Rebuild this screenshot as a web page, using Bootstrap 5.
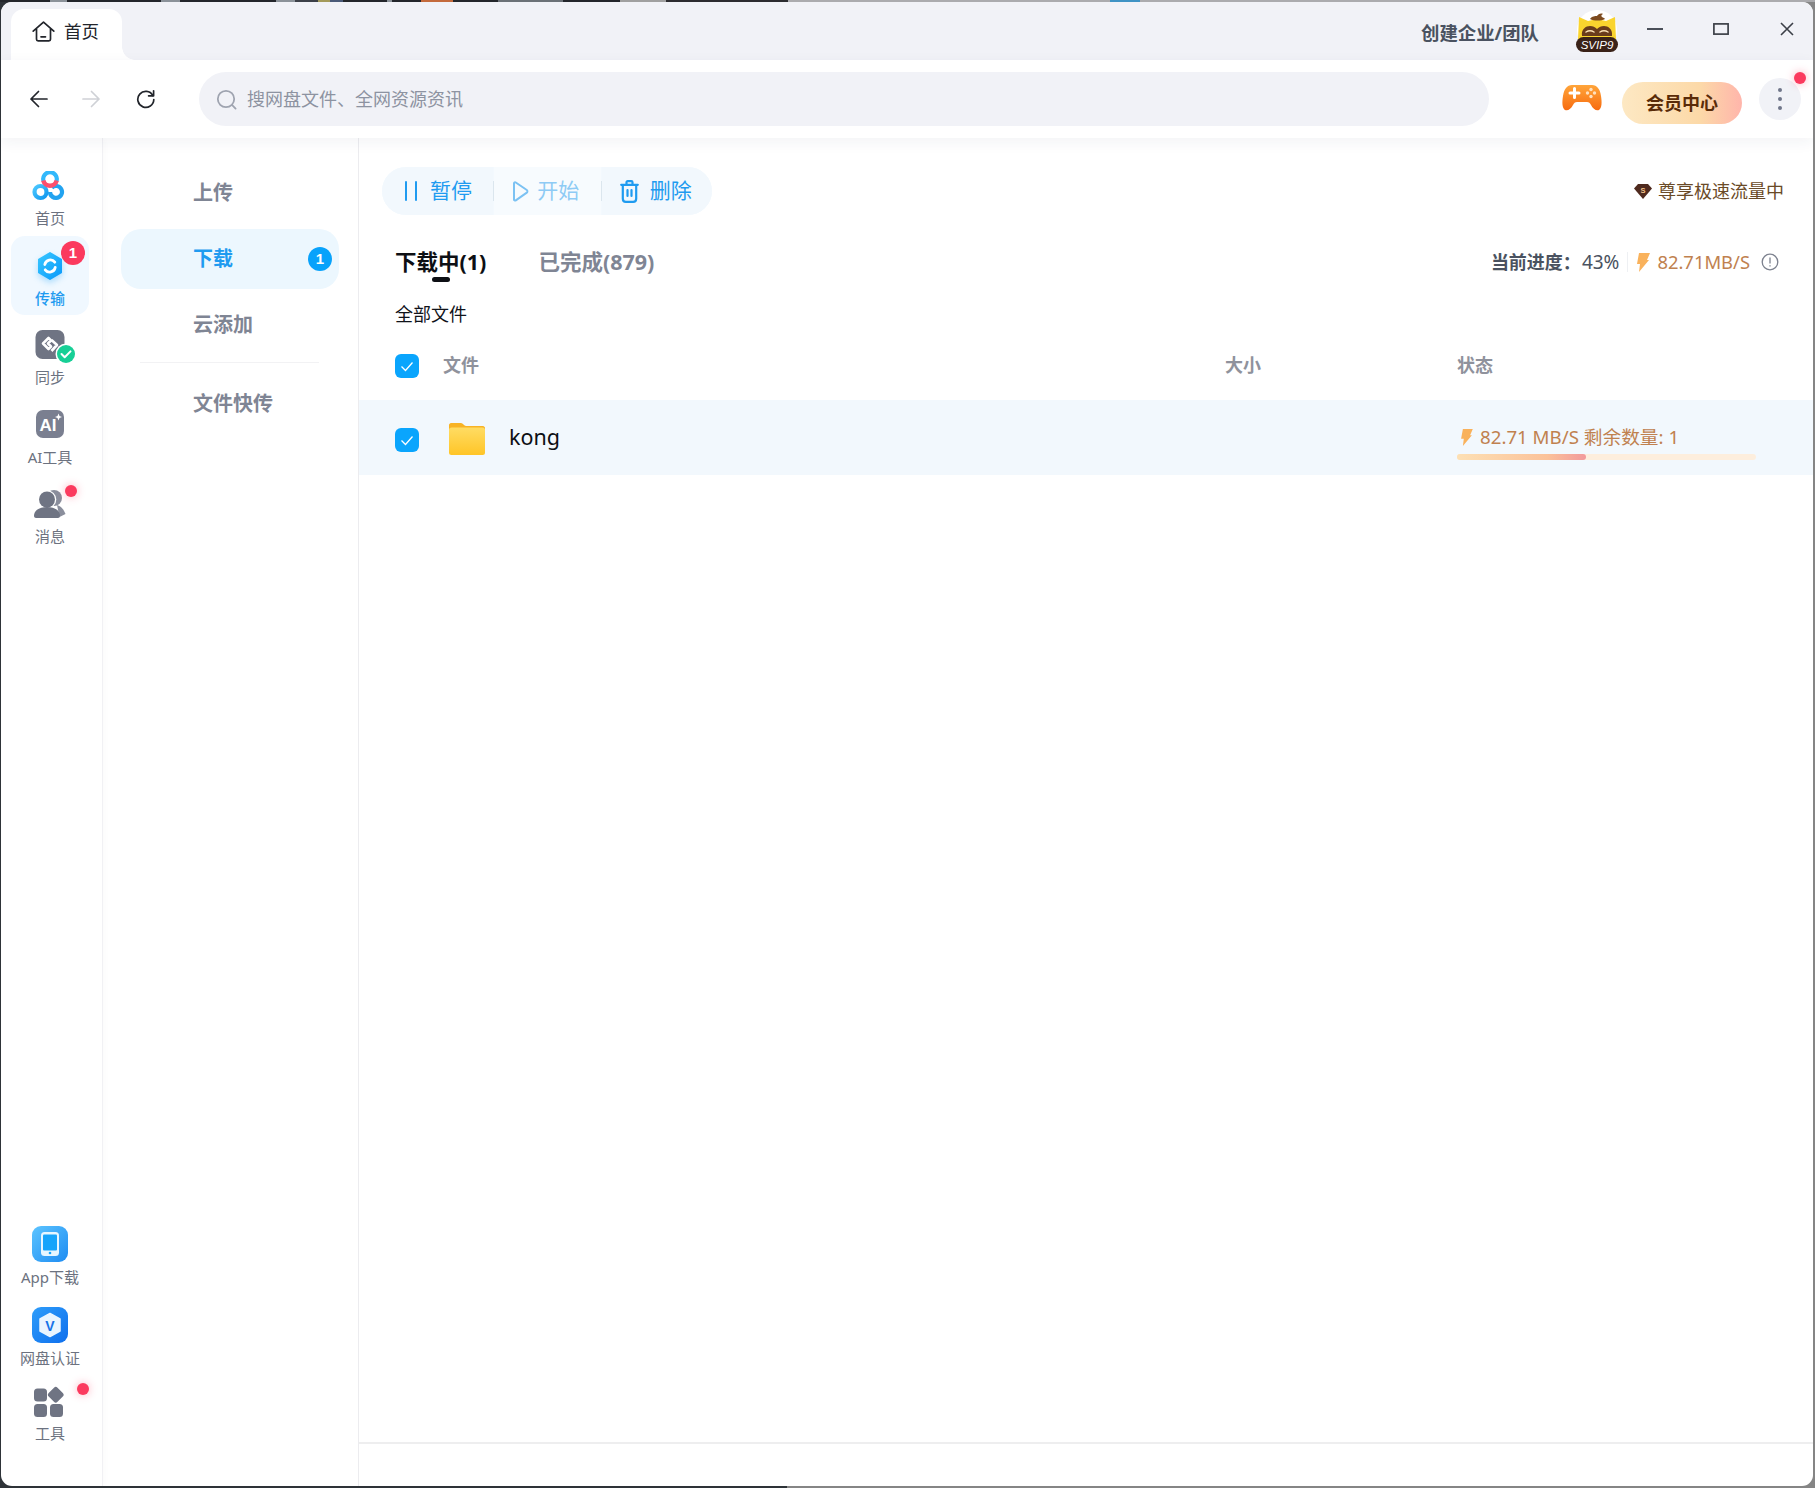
<!DOCTYPE html>
<html lang="zh-CN">
<head>
<meta charset="utf-8">
<title>首页</title>
<link href="https://cdn.jsdelivr.net/npm/bootstrap@5.3.0/dist/css/bootstrap.min.css" rel="stylesheet">
<style>
html,body{height:100%;margin:0}
body{
  width:1815px;height:1488px;overflow:hidden;padding:2px 2px 2px 1px;
  font-family:"Noto Sans","Noto Sans CJK SC",sans-serif;
  background:
   linear-gradient(90deg,#23262b 0 50px,#8b9299 50px 67px,#23262b 67px 161px,#8b9299 161px 180px,#23262b 180px 276px,#8b9299 276px 295px,#3c4048 295px 318px,#a39a5a 318px 330px,#4a5a78 330px 343px,#23262b 343px 387px,#8b9299 387px 392px,#23262b 392px 421px,#c46a3c 421px 453px,#23262b 453px 498px,#6b7177 498px 563px,#23262b 563px 620px,#a0a0a0 620px 666px,#2c2c30 666px 788px,#ababae 788px 1110px,#3f93c4 1110px 1140px,#ababae 1140px 100%) top/100% 2px no-repeat,
   linear-gradient(90deg,#2e3338 0 787px,#858585 787px 100%);
}
.app-window{height:1484px;background:#fff;border-radius:11px;overflow:hidden}
/* title bar */
.title-strip{height:58px;background:#f1f2f7;padding:7px 0 0 10px;flex:none}
.home-tab{width:111px;height:51px;background:#fff;border-radius:13px 13px 0 0;position:relative;padding:0 0 6px 21px;gap:9px;font-size:17.5px;color:#22252b}
.home-tab::after{content:"";position:absolute;left:100%;bottom:0;width:13px;height:13px;background:radial-gradient(circle at 100% 0,#f1f2f7 12.500px,#fff 13px)}
.right-ctl{margin-right:-7px}
.team-link{font-size:18.400px;font-weight:700;color:#4a5260;margin-right:36px;margin-top:-4px}
.avatar-box{width:44px;height:44px;margin-right:3px;margin-top:-7px}
.win-ctl{width:66px;height:44px;margin-top:-12px}
/* tool bar */
.tool-strip{height:78px;padding:0 10px 0 28px;flex:none;position:relative;z-index:2;box-shadow:0 4px 14px rgba(40,50,80,.06);background:#fff}
.nav-arrow{width:20px;height:20px}
.nav-arrow svg{display:block}
.nav-fwd{margin-left:32px}
.nav-reload{margin-left:35px}
.search-pill{width:1290px;height:54px;border-radius:27px;background:#f1f2f7;margin-left:43px;padding-left:17px;font-size:18px;color:#8d93a1;gap:10px}
.pad-game{width:40px;height:30px;margin-left:73px}
.vip-btn{width:120px;height:42px;margin-left:20px;border-radius:21px;border:0;font-size:18px;font-weight:700;color:#5a2b08;background:linear-gradient(90deg,#fde8c3,#fcd9a8 65%,#ffb5ab);padding:0;margin-top:8px}
.more-btn{width:42px;height:42px;margin-left:17px;border-radius:50%;background:#f1f2f7;position:relative}
.red-dot{position:absolute;width:12px;height:12px;border-radius:50%;background:#fb3a5e;box-shadow:0 0 8px rgba(251,58,94,.4)}
.more-btn .red-dot{right:-5px;top:-6px}
.dot-msg{right:12px;top:11px}
.dot-tools{right:0;top:-3px}
/* rail */
.rail-col{width:102px;flex:none;padding:18px 0 43px;border-right:1px solid #f1f1f4;box-shadow:2px 0 6px rgba(30,40,70,.02)}
.rail-entry{width:78px;height:79.500px;margin-left:10px;padding-top:15px;border-radius:14px;position:relative;font-size:15px;color:#6c7280;line-height:20px}
.rail-ico{height:30px;margin-bottom:7px}
.rail-ico svg{display:block;margin:0 auto}
.rail-entry.is-on{background:#f0f8ff;color:#1f9bf0;font-weight:500}
.rail-low{height:81px;padding-top:0}
.rail-low .rail-ico{height:36px;margin-bottom:5px}
.rail-last{height:79px}
.rail-tools{height:57px;padding-top:0}
.rail-tools .rail-ico{height:30px;margin-bottom:7px}
.rail-num{position:absolute;width:24px;height:24px;border-radius:50%;background:#fb3a5e;color:#fff;font-size:15px;font-weight:700;line-height:24px;right:4px;top:5px;font-family:"Liberation Sans",sans-serif}
.ok-mark{position:absolute;left:44px;top:28px}
.hex-shadow{filter:drop-shadow(0 3px 3px rgba(10,154,250,.3))}
/* sub nav */
.sub-col{width:256px;flex:none;padding:25px 19px 0 18px;border-right:1px solid #ececef;gap:6px}
.sub-entry{height:60px;border-radius:20px;padding-left:72px;padding-right:7px;font-size:20px;font-weight:700;color:#7f8594}
.sub-entry.is-on{background:#ecf7fe;color:#1f9bf0}
.sub-num{width:24px;height:24px;border-radius:50%;background:#08a2fb;color:#fff;font-size:15px;line-height:24px;font-family:"Liberation Sans",sans-serif}
.sub-rule{height:1px;background:#f2f2f4;margin:1px 20px 5px 19px}
/* main */
.main-col{min-width:0}
.op-pill{height:48px;width:330px;margin:29px 0 0 23px;border-radius:24px;background:#f3f9fe;font-size:21px;color:#1f9bf0}
.op-cell{height:100%;gap:12px}
.op-one{width:112px;padding-left:22px;background:#f2f8fd;border-radius:24px 0 0 24px}
.op-two{width:107px;padding-left:18px;color:#8ecbf5;gap:8px;background:#f7fbfe}
.op-three{width:111px;padding-left:18px;gap:11px;background:#f2f8fd;border-radius:0 24px 24px 0}
.op-sep{width:1px;height:20px;background:#dbe6ee;flex:none}
.vip-note{font-size:18px;color:#6a4a27;right:29px;top:40px;gap:6px}
.tab-bar{padding:0 34px 0 36px;height:48px;margin-top:23px}
.tab-head{font-size:21.500px;font-weight:700;color:#7f8594;position:relative;margin-right:52px}
.tab-head.is-on{color:#0d0f14}
.tab-head.is-on::after{content:"";position:absolute;left:37px;bottom:-4px;width:18px;height:5px;border-radius:3px;background:#0d0f14}
.stats{font-size:18.400px;color:#4a5260;gap:5px}
.stats b{font-size:18px;font-weight:700;margin-right:-4px}
.stats .pct{font-size:19px}
.stats .rate{color:#c0814f;margin-left:2px}
.stats .info-mark{margin-left:6px}
.stat-sep{width:1px;height:20px;background:#eef0f3;margin:0 3px}
.crumb-line{padding-left:36px;font-size:18px;color:#10131a;height:28px;line-height:28px;margin-top:14px}
.file-grid{display:grid;grid-template-columns:830px 232px 1fr;padding-left:36px;align-items:center}
.head-grid{height:64px;padding-bottom:6px;font-size:18px;font-weight:700;color:#8f929c;margin-top:8px}
.body-grid{height:75px;background:#f2f8fd}
.tick-box{width:24px;height:24px;border-radius:6px;background:#0aa5fd;flex:none;margin-top:2px}
.body-grid .tick-box{margin-top:5px}
.folder-ico{margin:2px 24px 0 30px}
.file-name{font-size:21.500px;color:#0d0f14}
.status-top{font-size:18.700px;color:#c0814f;gap:7px;margin-top:8px;margin-left:3px}
.bar-track{width:299px;height:6px;border-radius:3px;background:#fdeedd;margin-top:2px}
.bar-fill{height:100%;border-radius:3px;background:linear-gradient(90deg,#fde0b4,#fbc29a 70%,#f29a9c)}
.foot-strip{height:44px;border-top:2px solid #eeeeef;flex:none}
</style>
</head>
<body>
<div class="app-window d-flex flex-column">

  <div class="title-strip d-flex align-items-start">
    <div class="home-tab d-flex align-items-center">
      <svg width="23" height="21" viewBox="0 0 23 21" fill="none" stroke="#22252b" stroke-width="1.700" stroke-linejoin="round" stroke-linecap="round"><path d="M1.200 10.200 11.500 1.200l10.300 9M4.500 8v10.200a1.600 1.600 0 0 0 1.600 1.600h10.800a1.600 1.600 0 0 0 1.600-1.600V8"/><path d="M9 15.800h4.500"/></svg>
      <span>首页</span>
    </div>
    <div class="ms-auto right-ctl d-flex align-items-center h-100">
      <span class="team-link">创建企业/团队</span>
      <div class="avatar-box">
        <svg width="44" height="44" viewBox="0 0 44 44">
          <circle cx="22" cy="21" r="20" fill="#fff"/>
          <path d="M4 8l9 4c6-2 12-2 18 0l9-4 1 22H3z" fill="#fad42e"/>
          <path d="M7 27c-1-7 4-10 8-10 3 0 5 1 7 3 2-2 4-3 7-3 4 0 9 3 8 10z" fill="#6a3c1b"/>
          <path d="M15 10c2-3 5-3 7-3 1-2 4-3 6-2-2 1-2 2-1 3 1 1 3 1 3 2-4 2-11 2-15 0z" fill="#7d4b20"/>
          <path d="M11 23c3-2 5-2 8 0M25 23c3-2 5-2 8 0" stroke="#f9dfb4" stroke-width="1.500" fill="none" stroke-linecap="round"/>
          <rect x="1" y="28" width="42" height="15" rx="7.500" fill="#3a2218"/>
          <text x="22" y="40" text-anchor="middle" font-family="Liberation Sans" font-style="italic" font-size="11.500" fill="#fff">SVIP9</text>
        </svg>
      </div>
      <div class="win-ctl d-flex align-items-center justify-content-center"><svg width="16" height="2"><rect width="16" height="2" fill="#4a4f59"/></svg></div>
      <div class="win-ctl d-flex align-items-center justify-content-center"><svg width="16" height="12" fill="none" stroke="#3c4048" stroke-width="1.700"><rect x=".9" y=".9" width="14.200" height="10.200"/></svg></div>
      <div class="win-ctl d-flex align-items-center justify-content-center"><svg width="14" height="14" stroke="#3c4048" stroke-width="1.600"><path d="M1 1l12 12M13 1 1 13"/></svg></div>
    </div>
  </div>

  <div class="tool-strip d-flex align-items-center">
    <div class="nav-arrow"><svg width="20" height="20" fill="none" stroke="#22252b" stroke-width="1.700" stroke-linecap="round" stroke-linejoin="round"><path d="M18 10H2M9.500 2.500 2 10l7.500 7.500"/></svg></div>
    <div class="nav-arrow nav-fwd"><svg width="20" height="20" fill="none" stroke="#cfd1d6" stroke-width="1.700" stroke-linecap="round" stroke-linejoin="round"><path d="M2 10h16M10.500 2.500 18 10l-7.500 7.500"/></svg></div>
    <div class="nav-arrow nav-reload"><svg width="20" height="20" fill="none" stroke="#22252b" stroke-width="1.700" stroke-linecap="round" stroke-linejoin="round"><path d="M16.800 6.500a8 8 0 1 0 1 4"/><path d="M17.600 1.800v5h-5"/></svg></div>
    <div class="search-pill d-flex align-items-center">
      <svg width="21" height="21" fill="none" stroke="#9fa4b0" stroke-width="1.800" stroke-linecap="round"><circle cx="10" cy="10" r="8.200"/><path d="M16.200 16.200l3.400 3.400"/></svg>
      <span>搜网盘文件、全网资源资讯</span>
    </div>
    <div class="pad-game">
      <svg width="40" height="27" viewBox="0 0 40 27"><defs><linearGradient id="gp" x1="0" y1="0" x2="0" y2="1"><stop offset="0" stop-color="#ffa53a"/><stop offset="1" stop-color="#f76b0f"/></linearGradient></defs>
      <path d="M10 1h20c5 0 8 4 9 11 1 6 1 12-2 14-3 1-6-1-8-5-1-2-2-3-4-3H15c-2 0-3 1-4 3-2 4-5 6-8 5-3-2-3-8-2-14C2 5 5 1 10 1z" fill="url(#gp)"/>
      <path d="M8 9h9M12.500 4.500v9" stroke="#fff" stroke-width="3" stroke-linecap="round"/>
      <circle cx="29" cy="5.500" r="1.700" fill="#ffe0bd"/><circle cx="29" cy="12.500" r="1.700" fill="#ffe0bd"/><circle cx="25.500" cy="9" r="1.700" fill="#ffe0bd"/><circle cx="32.500" cy="9" r="1.700" fill="#ffe0bd"/></svg>
    </div>
    <button type="button" class="vip-btn">会员中心</button>
    <div class="more-btn d-flex flex-column align-items-center justify-content-center gap-1">
      <svg width="4" height="24" fill="#70768a"><circle cx="2" cy="3" r="2"/><circle cx="2" cy="12" r="2"/><circle cx="2" cy="21" r="2"/></svg>
      <span class="red-dot"></span>
    </div>
  </div>

  <div class="d-flex flex-grow-1 overflow-hidden">
    <div class="rail-col d-flex flex-column">
      <div class="rail-entry text-center">
        <div class="rail-ico">
          <svg width="36" height="30" viewBox="0 0 36 30" fill="none" stroke-width="4.200"><defs><linearGradient id="lg" x1="0" y1="0" x2="1" y2="1"><stop offset="0" stop-color="#4cc8ff"/><stop offset="1" stop-color="#0f97ef"/></linearGradient></defs>
          <circle cx="8.500" cy="21" r="6" stroke="url(#lg)"/><path d="M18 21a6 6 0 1 0 1.800-4.300 M18 21a6 6 0 0 0 11 3.200" stroke="#22a3f0"/><path d="M11.500 10a6.800 6.800 0 1 1 13 0" stroke="#32b8fb"/><path d="M11.300 9.500a6.900 6.900 0 0 0 13.400 0" stroke="#fb4f6e" stroke-width="4.500"/></svg>
        </div>首页
      </div>
      <div class="rail-entry is-on text-center">
        <div class="rail-ico">
          <svg class="hex-shadow" width="30" height="30" viewBox="0 0 30 30"><defs><linearGradient id="hx" x1="0" y1="0" x2="1" y2="1"><stop offset="0" stop-color="#37c6ff"/><stop offset="1" stop-color="#0a9afa"/></linearGradient></defs>
          <path d="M15 2 26 8.500v13L15 28 4 21.500v-13z" fill="url(#hx)" stroke="url(#hx)" stroke-width="2" stroke-linejoin="round"/>
          <path d="M9.800 13.500a5.600 5.600 0 0 1 10-2.300M20.200 16.500a5.600 5.600 0 0 1-10 2.300" stroke="#fff" stroke-width="2.800" fill="none" stroke-linecap="round"/></svg>
        </div>传输
        <span class="rail-num">1</span>
      </div>
      <div class="rail-entry text-center">
        <div class="rail-ico">
          <svg width="30" height="30" viewBox="0 0 30 30"><rect x=".5" width="29" height="29" rx="7" fill="#6f7483"/><path d="M13.500 8 8 13.500l5.500 5.500 2.500-2.500-3-3 3-3zM16.500 10l5.500 5-5.500 6" fill="none" stroke="#fff" stroke-width="2.600" stroke-linejoin="round"/></svg>
        </div>同步
        <svg class="ok-mark" width="22" height="22" viewBox="0 0 22 22"><circle cx="11" cy="11" r="10.500" fill="#fff"/><circle cx="11" cy="11" r="9" fill="#17cf96"/><path d="M6.500 11l3.200 3.200 5.800-5.800" stroke="#fff" stroke-width="2" fill="none" stroke-linecap="round" stroke-linejoin="round"/></svg>
      </div>
      <div class="rail-entry text-center">
        <div class="rail-ico">
          <svg width="30" height="30" viewBox="0 0 30 30"><rect x="1" width="28" height="28" rx="7" fill="#7a7f90"/><text x="13" y="21" text-anchor="middle" font-family="Liberation Sans" font-weight="700" font-size="17" fill="#fff">AI</text><path d="M23.500 3.500l1 2.500 2.500 1-2.500 1-1 2.500-1-2.500-2.500-1 2.500-1z" fill="#fff"/></svg>
        </div>AI工具
      </div>
      <div class="rail-entry text-center">
        <div class="rail-ico">
          <svg width="32" height="30" viewBox="0 0 32 30"><circle cx="20" cy="9" r="8" fill="#8a8e9c"/><path d="M23 16c4 1 7 5 8.500 9l-6 3z" fill="#8a8e9c"/><circle cx="13" cy="10.500" r="9.300" fill="#fff"/><circle cx="13" cy="10.500" r="8" fill="#6f7483"/><path d="M0 27c0-6 6-9 13-9s13 3 13 9c0 1-1 2-2 2H2c-1 0-2-1-2-2z" fill="#6f7483"/></svg>
        </div>消息
        <span class="red-dot dot-msg"></span>
      </div>

      <div class="mt-auto"></div>
      <div class="rail-entry rail-low text-center">
        <div class="rail-ico">
          <svg width="36" height="36" viewBox="0 0 36 36"><defs><linearGradient id="ap" x1="0" y1="0" x2="1" y2="1"><stop offset="0" stop-color="#5cc4ff"/><stop offset="1" stop-color="#1e8cf2"/></linearGradient></defs><rect width="36" height="36" rx="9" fill="url(#ap)"/><rect x="9" y="6" width="18" height="24" rx="3.500" fill="#e7f6ff"/><rect x="11" y="8.500" width="14" height="16" rx="1" fill="#16a4fb"/><circle cx="18" cy="27" r="1.300" fill="#16a4fb"/></svg>
        </div>App下载
      </div>
      <div class="rail-entry rail-low rail-last text-center">
        <div class="rail-ico">
          <svg width="36" height="36" viewBox="0 0 36 36"><defs><linearGradient id="vv" x1="0" y1="0" x2="1" y2="1"><stop offset="0" stop-color="#2e9dfa"/><stop offset="1" stop-color="#0f6fed"/></linearGradient></defs><rect width="36" height="36" rx="9" fill="url(#vv)"/><path d="M18 6.500 28 12v12l-10 5.500L8 24V12z" fill="#eaf5ff" stroke="#eaf5ff" stroke-width="1.500" stroke-linejoin="round"/><text x="18" y="23.500" text-anchor="middle" font-family="Liberation Sans" font-weight="700" font-size="14" fill="#1673e8">V</text></svg>
        </div>网盘认证
      </div>
      <div class="rail-entry rail-tools text-center">
        <div class="rail-ico">
          <svg width="32" height="31" viewBox="0 0 32 31" fill="#6f7483"><rect y="2.500" width="13" height="13" rx="3.500"/><rect y="18" width="13" height="13" rx="3.500"/><rect x="16" y="18" width="13" height="13" rx="3.500"/><rect x="15.500" y="2.500" width="12.500" height="12.500" rx="2.500" transform="rotate(45 21.750 8.750)"/></svg>
        </div>工具
        <span class="red-dot dot-tools"></span>
      </div>
    </div>

    <div class="sub-col d-flex flex-column">
      <div class="sub-entry d-flex align-items-center">上传</div>
      <div class="sub-entry is-on d-flex align-items-center justify-content-between"><span>下载</span><span class="sub-num text-center">1</span></div>
      <div class="sub-entry d-flex align-items-center">云添加</div>
      <div class="sub-rule"></div>
      <div class="sub-entry d-flex align-items-center">文件快传</div>
    </div>

    <div class="main-col flex-grow-1 d-flex flex-column position-relative">
      <div class="op-pill d-flex align-items-center">
        <div class="op-cell op-one d-flex align-items-center">
          <svg width="14" height="20" fill="#1f9bf0"><rect x="1" width="2" height="20" rx="1"/><rect x="11" width="2" height="20" rx="1"/></svg><span>暂停</span>
        </div>
        <span class="op-sep"></span>
        <div class="op-cell op-two d-flex align-items-center">
          <svg width="17" height="21" fill="none" stroke="#7cc2f3" stroke-width="2" stroke-linejoin="round"><path d="M2 2.500c0-1 1-1.500 1.800-1l11 7.500c.8.600.8 2 0 2.600l-11 7.800c-.8.500-1.800 0-1.800-1z"/></svg><span>开始</span>
        </div>
        <span class="op-sep"></span>
        <div class="op-cell op-three d-flex align-items-center">
          <svg width="19" height="23" fill="none" stroke="#1f9bf0" stroke-width="2.200" stroke-linecap="round" stroke-linejoin="round"><path d="M1.200 4.800h16.600M6.500 4.500V2.300c0-.7.500-1.200 1.200-1.200h3.600c.7 0 1.200.5 1.200 1.200v2.200M2.800 4.800v13.700c0 2 1.200 3.400 3 3.400h7.400c1.800 0 3-1.400 3-3.400V4.800M7.500 10v6M11.500 10v6"/></svg><span>删除</span>
        </div>
      </div>
      <div class="vip-note position-absolute d-flex align-items-center">
        <svg width="18" height="15" viewBox="0 0 18 15"><path d="M4 0h10l4 4.500L9 15 0 4.500z" fill="#4f2a1e"/><text x="9" y="8.500" text-anchor="middle" font-family="Liberation Sans" font-weight="700" font-size="7.500" fill="#f2c58d">S</text></svg>
        <span>尊享极速流量中</span>
      </div>

      <div class="tab-bar d-flex align-items-center">
        <span class="tab-head is-on">下载中(1)</span>
        <span class="tab-head">已完成(879)</span>
        <div class="stats ms-auto d-flex align-items-center">
          <b>当前进度：</b><span class="pct">43%</span><span class="stat-sep"></span>
          <svg width="14" height="20" viewBox="0 0 14 20"><path d="M3 1h11L11 8h2L3 20l1-8H1z" fill="#f9b25c"/></svg>
          <span class="rate">82.71MB/S</span>
          <svg class="info-mark" width="18" height="18" fill="none" stroke="#7c818e" stroke-width="1.300"><circle cx="9" cy="9" r="7.800"/><path d="M9 4.500v6M9 12.300v1.300"/></svg>
        </div>
      </div>

      <div class="crumb-line">全部文件</div>

      <div class="file-grid head-grid">
        <div class="d-flex align-items-center gap-4">
          <span class="tick-box d-flex align-items-center justify-content-center"><svg width="14" height="11" fill="none" stroke="#fff" stroke-width="1.300"><path d="M1.500 5.500 5.500 9.500 12.500 1.500"/></svg></span>
          <span>文件</span>
        </div>
        <div>大小</div>
        <div>状态</div>
      </div>
      <div class="file-grid body-grid">
        <div class="d-flex align-items-center">
          <span class="tick-box d-flex align-items-center justify-content-center"><svg width="14" height="11" fill="none" stroke="#fff" stroke-width="1.300"><path d="M1.500 5.500 5.500 9.500 12.500 1.500"/></svg></span>
          <svg class="folder-ico" width="36" height="32" viewBox="0 0 36 32"><defs><linearGradient id="fo" x1="0" y1="0" x2="0" y2="1"><stop offset="0" stop-color="#ffdc63"/><stop offset="1" stop-color="#ffc527"/></linearGradient></defs><path d="M2 0h10c2 0 3 3 5 3h17c1 0 2 1 2 2v5H0V2c0-1 1-2 2-2z" fill="#f8b325"/><rect y="4.500" width="36" height="27.500" rx="2.500" fill="url(#fo)"/></svg>
          <span class="file-name">kong</span>
        </div>
        <div></div>
        <div>
          <div class="status-top d-flex align-items-center">
            <svg width="13" height="18" viewBox="0 0 14 20"><path d="M3 1h11L11 8h2L3 20l1-8H1z" fill="#f9b25c"/></svg>
            <span>82.71 MB/S 剩余数量: 1</span>
          </div>
          <div class="bar-track"><div class="bar-fill" style="width:43%"></div></div>
        </div>
      </div>

      <div class="flex-grow-1"></div>
      <div class="foot-strip"></div>
    </div>
  </div>
</div>
<script src="https://cdn.jsdelivr.net/npm/bootstrap@5.3.0/dist/js/bootstrap.bundle.min.js"></script>
</body>
</html>
